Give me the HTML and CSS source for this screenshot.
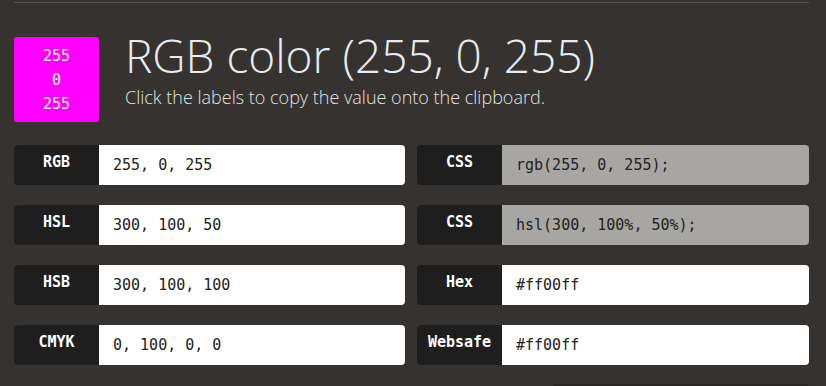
FILE: index.html
```html
<!DOCTYPE html>
<html lang="en">
<head>
    <meta charset="UTF-8">
    <meta name="viewport" content="width=device-width, initial-scale=1.0">
    <title>RGB color (255, 0, 255)</title>
    <link rel="stylesheet" href="styles.css">
</head>
<body>
    <div class="page">
        <div class="color-header">
            <div class="swatch">
                <span>255</span>
                <span>0</span>
                <span>255</span>
            </div>
            <div class="titles">
                <h1>RGB color (255, 0, 255)</h1>
                <p>Click the labels to copy the value onto the clipboard.</p>
            </div>
        </div>

        <div class="values">
            <div class="field">
                <div class="label">RGB</div>
                <input type="text" value="255, 0, 255">
            </div>
            <div class="field">
                <div class="label">CSS</div>
                <input type="text" class="readonly" value="rgb(255, 0, 255);" readonly>
            </div>
            <div class="field">
                <div class="label">HSL</div>
                <input type="text" value="300, 100, 50">
            </div>
            <div class="field">
                <div class="label">CSS</div>
                <input type="text" class="readonly" value="hsl(300, 100%, 50%);" readonly>
            </div>
            <div class="field">
                <div class="label">HSB</div>
                <input type="text" value="300, 100, 100">
            </div>
            <div class="field">
                <div class="label">Hex</div>
                <input type="text" value="#ff00ff">
            </div>
            <div class="field">
                <div class="label">CMYK</div>
                <input type="text" value="0, 100, 0, 0">
            </div>
            <div class="field">
                <div class="label">Websafe</div>
                <input type="text" value="#ff00ff">
            </div>
        </div>

        <div class="next-block"></div>
    </div>
</body>
</html>
```

FILE: styles.css
```css
html, body {
    margin: 0;
    padding: 0;
    height: 100%;
}
body {
    background: #363230;
    font-family: "Open Sans", sans-serif;
    overflow: hidden;
}
.page {
    width: 795px;
    margin: 0 0 0 14px;
    padding-top: 2px;
}
.color-header {
    display: flex;
    align-items: flex-start;
    gap: 26px;
    border-top: 1px solid #5a5550;
    padding-top: 34px;
}
.swatch {
    width: 85px;
    height: 85px;
    background: #ff00ff;
    border-radius: 3px;
    display: flex;
    flex-direction: column;
    justify-content: center;
    align-items: center;
    color: #fff;
    font-family: "DejaVu Sans Mono", monospace;
    font-size: 15px;
    line-height: 24px;
}
.titles {
    padding-top: 1px;
}
.titles h1 {
    margin: -6px 0 0;
    font-weight: 300;
    font-size: 46px;
    line-height: 46px;
    color: #e6ecee;
}
.titles p {
    margin: 9px 0 0;
    font-weight: 300;
    font-size: 18px;
    line-height: 20px;
    color: #e2e2e2;
}
.values {
    display: grid;
    grid-template-columns: 391px 392px;
    gap: 20px 12px;
    margin-top: 23px;
}
.field {
    display: flex;
    height: 40px;
}
.label {
    width: 85px;
    flex: none;
    background: #1e1e1e;
    color: #fff;
    font-family: "DejaVu Sans Mono", monospace;
    font-weight: bold;
    font-size: 15px;
    display: flex;
    align-items: center;
    justify-content: center;
    padding-bottom: 6px;
    box-sizing: border-box;
    border-radius: 4px 0 0 4px;
    cursor: pointer;
}
.field input {
    flex: 1;
    min-width: 0;
    border: none;
    margin: 0;
    padding: 0 14px;
    background: #fff;
    color: #222;
    font-family: "DejaVu Sans Mono", monospace;
    font-size: 15px;
    border-radius: 0 4px 4px 0;
    outline: none;
}
.field input.readonly {
    background: #a8a6a3;
}
.next-block {
    margin: 19px 0 0 539px;
    height: 8px;
    background: #2a2624;
    border-radius: 4px 4px 0 0;
}
```
